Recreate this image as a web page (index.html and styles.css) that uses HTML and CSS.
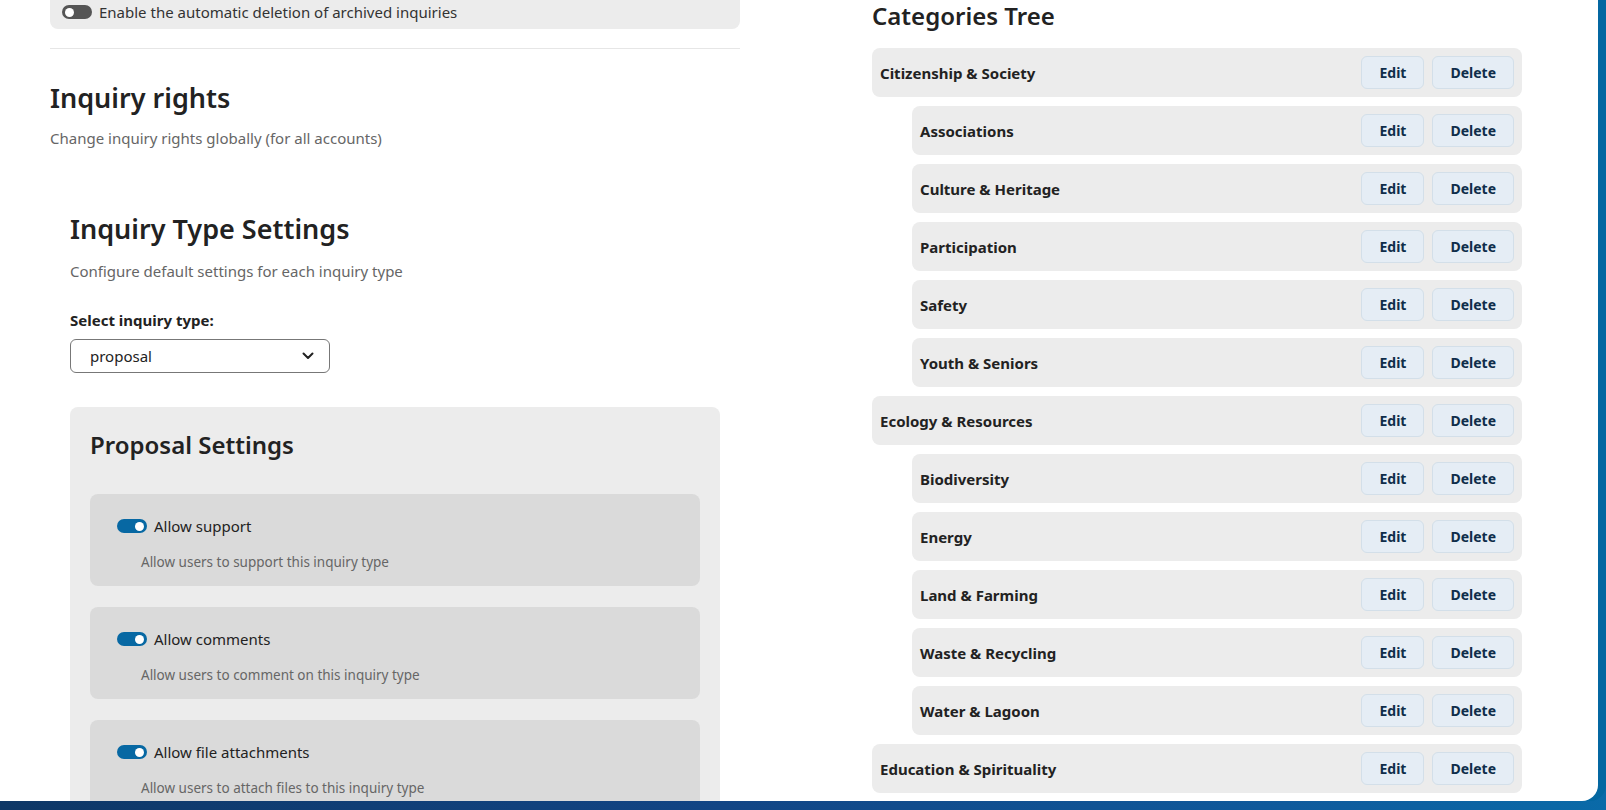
FILE: index.html
```html
<!DOCTYPE html>
<html lang="en">
<head>
<meta charset="utf-8">
<title>Settings</title>
<link rel="stylesheet" href="styles.css">
</head>
<body>
<div class="frame">
  <div class="layout">
    <section class="left">
      <div class="archive-card">
        <span class="toggle"><span class="knob"></span></span>
        <span class="archive-label">Enable the automatic deletion of archived inquiries</span>
      </div>
      <hr class="divider">
      <h2 class="title-lg">Inquiry rights</h2>
      <p class="muted">Change inquiry rights globally (for all accounts)</p>

      <div class="type-settings">
        <h2 class="title-lg">Inquiry Type Settings</h2>
        <p class="muted">Configure default settings for each inquiry type</p>
        <label class="field-label">Select inquiry type:</label>
        <div class="select">
          <span>proposal</span>
          <svg class="chevron" width="14" height="14" viewBox="0 0 14 14"><path d="M2.5 4.5 L7 9 L11.5 4.5" fill="none" stroke="#222" stroke-width="2" stroke-linecap="round" stroke-linejoin="round"/></svg>
        </div>

        <div class="proposal-card">
          <h3 class="title-md">Proposal Settings</h3>
          <div class="option">
            <div class="option-head">
              <span class="toggle on"><span class="knob"></span></span>
              <span class="option-title">Allow support</span>
            </div>
            <p class="option-desc">Allow users to support this inquiry type</p>
          </div>
          <div class="option">
            <div class="option-head">
              <span class="toggle on"><span class="knob"></span></span>
              <span class="option-title">Allow comments</span>
            </div>
            <p class="option-desc">Allow users to comment on this inquiry type</p>
          </div>
          <div class="option">
            <div class="option-head">
              <span class="toggle on"><span class="knob"></span></span>
              <span class="option-title">Allow file attachments</span>
            </div>
            <p class="option-desc">Allow users to attach files to this inquiry type</p>
          </div>
        </div>
      </div>
    </section>

    <section class="right">
      <h2 class="title-md tree-title">Categories Tree</h2>
      <ul class="tree">
        <li class="row"><span class="row-name">Citizenship &amp; Society</span><span class="actions"><button class="btn">Edit</button><button class="btn">Delete</button></span></li>
        <li class="row child"><span class="row-name">Associations</span><span class="actions"><button class="btn">Edit</button><button class="btn">Delete</button></span></li>
        <li class="row child"><span class="row-name">Culture &amp; Heritage</span><span class="actions"><button class="btn">Edit</button><button class="btn">Delete</button></span></li>
        <li class="row child"><span class="row-name">Participation</span><span class="actions"><button class="btn">Edit</button><button class="btn">Delete</button></span></li>
        <li class="row child"><span class="row-name">Safety</span><span class="actions"><button class="btn">Edit</button><button class="btn">Delete</button></span></li>
        <li class="row child"><span class="row-name">Youth &amp; Seniors</span><span class="actions"><button class="btn">Edit</button><button class="btn">Delete</button></span></li>
        <li class="row"><span class="row-name">Ecology &amp; Resources</span><span class="actions"><button class="btn">Edit</button><button class="btn">Delete</button></span></li>
        <li class="row child"><span class="row-name">Biodiversity</span><span class="actions"><button class="btn">Edit</button><button class="btn">Delete</button></span></li>
        <li class="row child"><span class="row-name">Energy</span><span class="actions"><button class="btn">Edit</button><button class="btn">Delete</button></span></li>
        <li class="row child"><span class="row-name">Land &amp; Farming</span><span class="actions"><button class="btn">Edit</button><button class="btn">Delete</button></span></li>
        <li class="row child"><span class="row-name">Waste &amp; Recycling</span><span class="actions"><button class="btn">Edit</button><button class="btn">Delete</button></span></li>
        <li class="row child"><span class="row-name">Water &amp; Lagoon</span><span class="actions"><button class="btn">Edit</button><button class="btn">Delete</button></span></li>
        <li class="row"><span class="row-name">Education &amp; Spirituality</span><span class="actions"><button class="btn">Edit</button><button class="btn">Delete</button></span></li>
      </ul>
    </section>
  </div>
</div>
</body>
</html>
```

FILE: styles.css
```css
* { box-sizing: border-box; }

html, body {
  margin: 0;
  height: 100%;
  overflow: hidden;
}

body {
  font-family: "Noto Sans", "Open Sans", sans-serif;
  color: #222;
  background: linear-gradient(90deg, #0e3766 0%, #124585 45%, #0f5a9c 80%, #0a6aa8 100%);
}

.frame {
  width: 1598px;
  height: 801px;
  background: #fff;
  border-bottom-right-radius: 16px;
  overflow: hidden;
  box-shadow: 8px 0 0 #0467a1;
}

.layout {
  display: grid;
  grid-template-columns: 690px 650px;
  column-gap: 132px;
  padding-left: 50px;
}

/* ---------- left column ---------- */
.archive-card {
  height: 29px;
  background: #ececec;
  border-radius: 0 0 8px 8px;
  display: flex;
  align-items: center;
  gap: 7px;
  padding: 0 12px 5px;
}

.archive-label {
  font-size: 15px;
  color: #333;
}

.toggle {
  flex: none;
  width: 30px;
  height: 14px;
  border-radius: 7px;
  background: #555;
  display: flex;
  align-items: center;
  padding: 0 3px;
}

.toggle .knob {
  width: 9px;
  height: 9px;
  border-radius: 50%;
  background: #fff;
}

.toggle.on {
  background: #0768a3;
  justify-content: flex-end;
}

.divider {
  border: 0;
  border-top: 1px solid #e6e6e6;
  margin: 19px 0 0;
}

.title-lg {
  font-size: 27px;
  font-weight: 600;
  line-height: 34px;
  margin: 32px 0 0;
  color: #222;
}

.muted {
  font-size: 15px;
  color: #666;
  margin: 13px 0 0;
  line-height: 20px;
}

.type-settings {
  padding: 0 20px;
  margin-top: 64px;
}

.type-settings .title-lg {
  margin-top: 0;
}

.type-settings .muted {
  margin-top: 15px;
}

.field-label {
  display: block;
  font-size: 15px;
  font-weight: 700;
  color: #222;
  margin-top: 29px;
  line-height: 20px;
}

.select {
  margin-top: 9px;
  width: 260px;
  height: 34px;
  border: 1px solid #777;
  border-radius: 6px;
  display: flex;
  align-items: center;
  justify-content: space-between;
  padding: 0 14px 0 19px;
  font-size: 15px;
  color: #222;
}

.chevron { display: block; }

.proposal-card {
  margin-top: 34px;
  width: 650px;
  background: #ececec;
  border-radius: 8px;
  padding: 22px 20px 20px;
  display: flex;
  flex-direction: column;
  gap: 21px;
}

.title-md {
  font-size: 24px;
  font-weight: 600;
  line-height: 32px;
  margin: 0;
  color: #222;
}

.proposal-card .title-md {
  margin-bottom: 12px;
}

.option {
  background: #dadada;
  border-radius: 8px;
  height: 92px;
  padding: 22px 27px 0;
}

.option-head {
  display: flex;
  align-items: center;
  gap: 7px;
  height: 20px;
}

.option-title {
  font-size: 15px;
  color: #222;
}

.option-desc {
  margin: 16px 0 0 24px;
  font-size: 13.5px;
  color: #666;
  line-height: 20px;
}

/* ---------- right column ---------- */
.tree-title {
  margin-top: 0;
  line-height: 31px;
}

.tree {
  list-style: none;
  margin: 17px 0 0;
  padding: 0;
  display: flex;
  flex-direction: column;
  gap: 9px;
}

.row {
  height: 49px;
  background: #ececec;
  border-radius: 8px;
  display: flex;
  align-items: center;
  justify-content: space-between;
  padding: 0 8px;
}

.row.child {
  margin-left: 40px;
}

.row-name {
  font-size: 15px;
  font-weight: 700;
  color: #222;
}

.actions {
  display: flex;
  gap: 8px;
}

.btn {
  font-family: inherit;
  font-size: 14px;
  font-weight: 700;
  color: #0f2d4a;
  background: #e5edf5;
  border: 1px solid #d3dfe9;
  border-radius: 6px;
  height: 33px;
  padding: 0 17px;
  cursor: pointer;
}
```
